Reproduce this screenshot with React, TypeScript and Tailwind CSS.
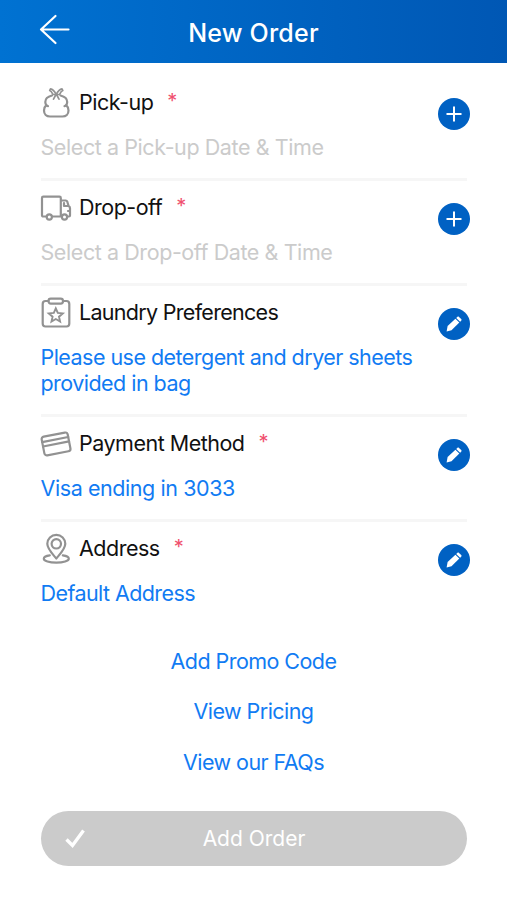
import { JSX, ReactNode } from 'react'

interface SectionProps {
  icon: ReactNode
  title: string
  value: string
  required?: boolean
  filled?: boolean
  last?: boolean
  tracking?: string
  valueTracking?: string
}

const iconProps = {
  width: 32,
  height: 32,
  viewBox: '0 0 32 32',
  fill: 'none',
  stroke: '#929292',
  strokeWidth: 2.2,
  strokeLinecap: 'round',
  strokeLinejoin: 'round'
} as const

function BagIcon(): JSX.Element {
  return (
    <svg {...iconProps}>
      <path d="M12 8.500C8 9.500 5.300 11.800 5.300 15c0 1.200.3 2.200 1 3.200C4.800 19.500 4 21.300 4 23.500 4 27.300 6.500 29.500 10 29.500h12.500c3.500 0 6-2.200 6-6 0-2.200-.8-4-2.300-5.300.7-1 1-2 1-3.200 0-3.200-2.700-5.500-6.700-6.500" />
      <path d="M6.300 18.200c.4.600 1 .9 1.700 1M26.200 18.200c-.4.600-1 .9-1.700 1" />
      <path d="M16.200 7.500C14.500 4 12.500 2 10.500 1.800L9.700 3.500C11.300 4 12 5.500 13 7.500zM16.200 7.500C18 4 20 2 22 1.800L22.800 3.500C21.200 4 20.500 5.500 19.500 7.500zM15.700 8l-2.200 4.200M16.800 8l2.200 4.200" strokeWidth="1.700" />
    </svg>
  )
}

function TruckIcon(): JSX.Element {
  return (
    <svg {...iconProps}>
      <path d="M6 24.500H3.200C2.500 24.500 2 24 2 23.300V6c0-.8.500-1.300 1.300-1.300H19.500c.8 0 1.300.5 1.300 1.300v18.500h-8M21 8.500h4.700c.8 0 1.300.4 1.600 1.200l1.300 4.300c1 .5 1.400 1.200 1.400 2.200V23.500c0 .6-.4 1-1 1h-1M28.300 14h-4.300v-3M28 19h2" />
      <circle cx="9.300" cy="25" r="2.600" />
      <circle cx="24.500" cy="25" r="2.600" />
    </svg>
  )
}

function ClipboardIcon(): JSX.Element {
  return (
    <svg {...iconProps}>
      <path d="M8.500 4H5.500C3.500 4 2.700 5 2.700 7v19.500c0 2 .8 3 2.800 3h21c2 0 2.800-1 2.800-3V7c0-2-.8-3-2.800-3H23" />
      <rect x="8.500" y="1.600" width="14.500" height="5" rx="2.300" />
      <path d="m15.800 11.300 2 4.600 5 .5-3.800 3.300 1.100 4.900-4.300-2.600-4.300 2.600 1.100-4.900-3.800-3.300 5-.5z" strokeWidth="1.900" strokeLinejoin="miter" />
    </svg>
  )
}

function CardIcon(): JSX.Element {
  return (
    <svg {...iconProps}>
      <g transform="rotate(-11 15.800 16)">
        <rect x="2.800" y="6.500" width="26.500" height="19" rx="2.500" />
        <path d="M2.800 11.500h26.500M2.800 16h26.500" />
      </g>
    </svg>
  )
}

function PinIcon(): JSX.Element {
  return (
    <svg {...iconProps}>
      <path d="M16.300 25.500C13 21.500 7.300 16 7.300 10.800a9 9 0 0 1 18 0C25.300 16 19.600 21.500 16.300 25.500z" />
      <circle cx="16.300" cy="10.800" r="4.700" />
      <path d="M9.800 22.300C5.800 22.800 3.800 24.200 3.800 25.700c0 2.200 5.500 3.900 12.500 3.900s12.500-1.700 12.500-3.900c0-1.500-2-2.900-6-3.400" />
    </svg>
  )
}

function AddButton(): JSX.Element {
  return (
    <button className="w-8 h-8 shrink-0 rounded-full bg-[#0061c3]">
      <svg width="32" height="32" viewBox="0 0 32 32" stroke="white" strokeWidth="2" fill="none">
        <path d="M16 8.500v15M8.500 16h15" />
      </svg>
    </button>
  )
}

function EditButton(): JSX.Element {
  return (
    <button className="w-8 h-8 shrink-0 rounded-full bg-[#0061c3]">
      <svg width="32" height="32" viewBox="0 0 32 32" fill="white">
        <path d="M8.600 23.400 9.600 18.100 17.400 10.700 21.300 14.600 13.500 22.300z" />
        <path d="m18.200 9.900 1.100-1c.6-.5 1.200-.5 1.700 0l2.200 2.200c.5.500.5 1.100 0 1.700l-1.100 1z" />
      </svg>
    </button>
  )
}

function Section({
  icon,
  title,
  value,
  required,
  filled,
  last,
  tracking = 'tracking-[-0.5px]',
  valueTracking = 'tracking-[-0.42px]'
}: SectionProps): JSX.Element {
  return (
    <div className={last ? 'pb-4' : 'border-b-[3px] border-[#f6f6f6] pb-[18px]'}>
      <div className="flex items-start justify-between pt-[11px] -mr-[3px]">
        <div>
          <div className="flex items-center h-8">
            <div className="w-8 h-8 mr-[7px] -ml-px">{icon}</div>
            <h2 className={`text-[21.5px] text-[#111] whitespace-nowrap ${tracking}`}>{title}</h2>
            {required && <span className="ml-3.5 -mt-1 text-[20px] text-[#f0506e] leading-none">*</span>}
          </div>
          <p
            className={`mt-[15px] w-[385px] -ml-[0.5px] text-[21.5px] leading-[26px] ${valueTracking} ${
              filled ? 'text-[#117bf3]' : 'text-[#cbcbcb]'
            }`}
          >
            {value}
          </p>
        </div>
        <div className="pt-[11.5px]">{filled ? <EditButton /> : <AddButton />}</div>
      </div>
    </div>
  )
}

export default function App(): JSX.Element {
  return (
    <div className="w-[507px] h-[900px] bg-white font-['Inter',sans-serif] overflow-hidden">
      <header className="relative h-[63px] flex items-center justify-center bg-linear-to-r from-[#0072d2] to-[#0057b4]">
        <button className="absolute left-[38px] top-[13px]">
          <svg width="34" height="34" viewBox="0 0 34 34" fill="none" stroke="white" strokeWidth="2.200" strokeLinecap="round" strokeLinejoin="round">
            <path d="M30.500 16.500H3M17.500 3 3 16.500l14.500 13.500" />
          </svg>
        </button>
        <h1 className="text-white text-[25px] font-medium leading-8 tracking-[0.2px] pt-0.5">New Order</h1>
      </header>

      <main className="pl-[41px] pr-10 pt-[12.5px]">
        <Section icon={<BagIcon />} title="Pick-up" value="Select a Pick-up Date & Time" required />
        <Section icon={<TruckIcon />} title="Drop-off" value="Select a Drop-off Date & Time" required />
        <Section
          icon={<ClipboardIcon />}
          title="Laundry Preferences"
          value="Please use detergent and dryer sheets provided in bag"
          filled
          tracking="tracking-[-0.7px]"
          valueTracking="tracking-[-0.54px]"
        />
        <Section icon={<CardIcon />} title="Payment Method" value="Visa ending in 3033" required filled />
        <Section
          icon={<PinIcon />}
          title="Address"
          value="Default Address"
          required
          filled
          last
          valueTracking="tracking-[-0.58px]"
        />

        <nav className="flex flex-col items-center gap-[24.5px] pt-[26px] pr-px text-[21.5px] leading-[26px] text-[#117bf3] tracking-[-0.55px]">
          <a>Add Promo Code</a>
          <a>View Pricing</a>
          <a>View our FAQs</a>
        </nav>

        <button className="relative mt-9 w-full h-[55px] rounded-full bg-[#cbcbcb] text-white text-[21px] flex items-center justify-center pt-0.5">
          <svg className="absolute left-6 top-[17px]" width="22" height="22" viewBox="0 0 22 22" fill="none" stroke="white" strokeWidth="3.400">
            <path d="M1.500 11.500 7.500 17.500 18.500 2.500" />
          </svg>
          Add Order
        </button>
      </main>
    </div>
  )
}
